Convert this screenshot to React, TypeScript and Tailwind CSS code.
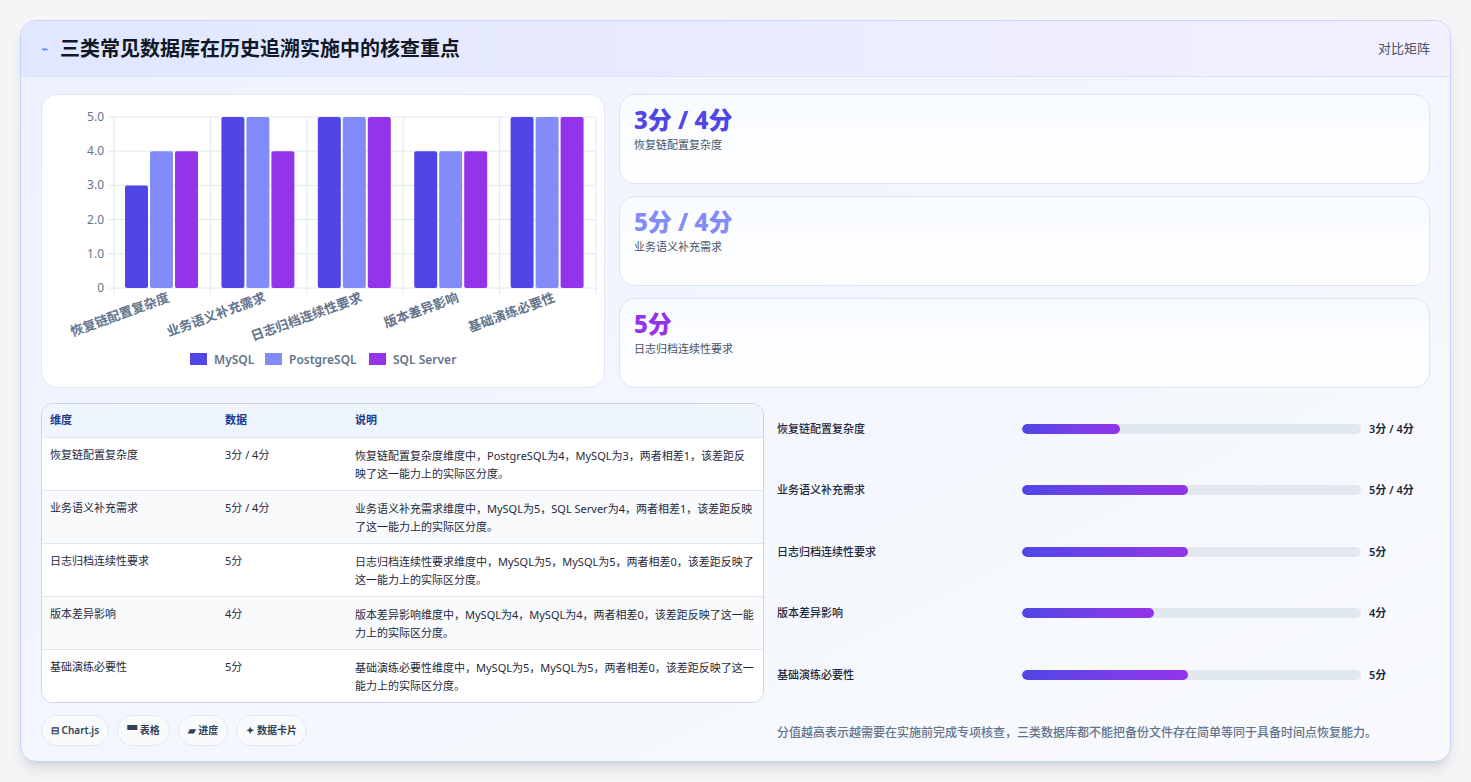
import React from 'react'

const font = { fontFamily: '"Noto Sans", "Noto Sans CJK SC", sans-serif' }

const cats = ['恢复链配置复杂度', '业务语义补充需求', '日志归档连续性要求', '版本差异影响', '基础演练必要性']
const data = [
  [3, 4, 4],
  [5, 5, 4],
  [5, 5, 5],
  [4, 4, 4],
  [5, 5, 5],
]
const colors = ['#4f46e5', '#818cf8', '#9333ea']

const stats = [
  { v: '3分 / 4分', l: '恢复链配置复杂度', c: 'text-[#4f46e5]' },
  { v: '5分 / 4分', l: '业务语义补充需求', c: 'text-[#818cf8]' },
  { v: '5分', l: '日志归档连续性要求', c: 'text-[#9333ea]' },
]

const rows = [
  ['恢复链配置复杂度', '3分 / 4分', '恢复链配置复杂度维度中，PostgreSQL为4，MySQL为3，两者相差1，该差距反映了这一能力上的实际区分度。'],
  ['业务语义补充需求', '5分 / 4分', '业务语义补充需求维度中，MySQL为5，SQL Server为4，两者相差1，该差距反映了这一能力上的实际区分度。'],
  ['日志归档连续性要求', '5分', '日志归档连续性要求维度中，MySQL为5，MySQL为5，两者相差0，该差距反映了这一能力上的实际区分度。'],
  ['版本差异影响', '4分', '版本差异影响维度中，MySQL为4，MySQL为4，两者相差0，该差距反映了这一能力上的实际区分度。'],
  ['基础演练必要性', '5分', '基础演练必要性维度中，MySQL为5，MySQL为5，两者相差0，该差距反映了这一能力上的实际区分度。'],
]

const progress = [
  ['恢复链配置复杂度', 29, '3分 / 4分'],
  ['业务语义补充需求', 49, '5分 / 4分'],
  ['日志归档连续性要求', 49, '5分'],
  ['版本差异影响', 39, '4分'],
  ['基础演练必要性', 49, '5分'],
] as const

function Chart() {
  const left = 72, right = 554, top = 22, bottom = 193
  const step = (right - left) / 5
  const y = (v: number) => bottom - (v / 5) * (bottom - top)
  return (
    <svg width="564" height="294" className="block">
      {[0, 1, 2, 3, 4, 5].map((t) => (
        <g key={t}>
          <line x1={left - 6} x2={right} y1={y(t)} y2={y(t)} stroke="#e2e8f0" />
          <text x={left - 10} y={y(t) + 4} textAnchor="end" fontSize="12" fill="#64748b">
            {t === 0 ? '0' : t.toFixed(1)}
          </text>
        </g>
      ))}
      {[0, 1, 2, 3, 4, 5].map((i) => (
        <line key={i} x1={left + i * step} x2={left + i * step} y1={top} y2={bottom + 6} stroke="#e2e8f0" />
      ))}
      {data.map((d, i) =>
        d.map((v, j) => (
          <rect key={`${i}-${j}`} x={left + i * step + 11 + j * 25} y={y(v)} width="23" height={bottom - y(v)} rx="2" fill={colors[j]} />
        ))
      )}
      {cats.map((c, i) => {
        const cx = left + i * step + step / 2 + 8
        return (
          <text key={c} x={cx} y={206} textAnchor="end" fontSize="13" fontWeight="600" fill="#64748b" transform={`rotate(-20 ${cx} 206)`}>
            {c}
          </text>
        )
      })}
      {[
        ['MySQL', 148],
        ['PostgreSQL', 223],
        ['SQL Server', 327],
      ].map(([n, x], j) => (
        <g key={n as string}>
          <rect x={x as number} y={258} width="17" height="12" fill={colors[j]} />
          <text x={(x as number) + 24} y={269} fontSize="12" fontWeight="600" fill="#64748b">{n}</text>
        </g>
      ))}
    </svg>
  )
}

export default function App() {
  return (
    <div className="w-[1471px] h-[782px] bg-[#f5f5f7] p-5" style={font}>
      <div className="h-[742px] rounded-2xl border border-[#c7d2fe] bg-gradient-to-br from-[#eef2ff] to-[#f8fafc] overflow-hidden shadow-lg flex flex-col">
        {/* Header */}
        <div className="h-[56px] flex items-center justify-between px-5 bg-gradient-to-r from-[#e0e7ff] to-[#f3f0ff] border-b border-[#dbe3f5]">
          <div className="flex items-center gap-3">
            <span className="text-[#3b82f6] text-xs">⌁</span>
            <h1 className="text-[20px] font-bold text-[#111827]">三类常见数据库在历史追溯实施中的核查重点</h1>
          </div>
          <span className="text-[13px] text-[#475569]">对比矩阵</span>
        </div>

        <div className="flex-1 px-5 pt-[17px] flex flex-col gap-[15px]">
          {/* Top */}
          <div className="flex gap-[14px]">
            <div className="w-[564px] h-[294px] bg-white rounded-2xl border border-[#e2e8f0]">
              <Chart />
            </div>
            <div className="flex-1 flex flex-col gap-[12px]">
              {stats.map((s) => (
                <div key={s.l} className="h-[90px] rounded-2xl border border-[#dbe5f5] bg-gradient-to-b from-[#f8fbff] to-white px-[14px] pt-[9px]">
                  <div className={`text-[24px] font-extrabold leading-[32px] ${s.c}`}>{s.v}</div>
                  <div className="text-[11px] text-[#475569] mt-[1px]">{s.l}</div>
                </div>
              ))}
            </div>
          </div>

          {/* Bottom */}
          <div className="flex gap-[13px]">
            <div className="w-[723px] flex flex-col">
              <div className="rounded-xl border border-[#cbd5e1] overflow-hidden bg-white">
                <table className="w-full text-[11px] text-[#1e293b] border-collapse">
                  <thead>
                    <tr className="bg-[#eef5ff] text-[#1e3a8a] h-[33px]">
                      <th className="text-left pl-2 w-[183px] font-semibold">维度</th>
                      <th className="text-left w-[130px] font-semibold">数据</th>
                      <th className="text-left font-semibold">说明</th>
                    </tr>
                  </thead>
                  <tbody>
                    {rows.map((r, i) => (
                      <tr key={r[0]} className={`border-t border-[#e2e8f0] h-[53px] align-top ${i % 2 === 1 ? 'bg-[#f8fafc]' : 'bg-white'}`}>
                        <td className="pl-2 pt-[9px]">{r[0]}</td>
                        <td className="pt-[9px]">{r[1]}</td>
                        <td className="pt-[9px] pr-2 leading-[18px]">{r[2]}</td>
                      </tr>
                    ))}
                  </tbody>
                </table>
              </div>
              <div className="flex gap-2 mt-[12px] text-[10px] font-semibold text-[#334155]">
                {['⊟ Chart.js', '▀ 表格', '▰ 进度', '✦ 数据卡片'].map((t) => (
                  <span key={t} className="rounded-full border border-[#e2e8f0] bg-[#f8fafc] px-[9px] py-[7px]">{t}</span>
                ))}
              </div>
            </div>
            <div className="flex-1 flex flex-col -mt-[5px]">
              {progress.map(([l, w, v]) => (
                <div key={l} className="h-[61.5px] flex items-center text-[11px] font-medium text-[#1e293b]">
                  <div className="w-[245px]">{l}</div>
                  <div className="w-[339px] h-[10px] rounded-full bg-[#e2e8f0] overflow-hidden">
                    <div className="h-full rounded-full bg-gradient-to-r from-[#4f46e5] to-[#9333ea]" style={{ width: `${w}%` }} />
                  </div>
                  <div className="ml-2 font-semibold">{v}</div>
                </div>
              ))}
              <p className="mt-[18px] text-[12px] font-medium text-[#64748b]">
                分值越高表示越需要在实施前完成专项核查，三类数据库都不能把备份文件存在简单等同于具备时间点恢复能力。
              </p>
            </div>
          </div>
        </div>
      </div>
    </div>
  )
}
